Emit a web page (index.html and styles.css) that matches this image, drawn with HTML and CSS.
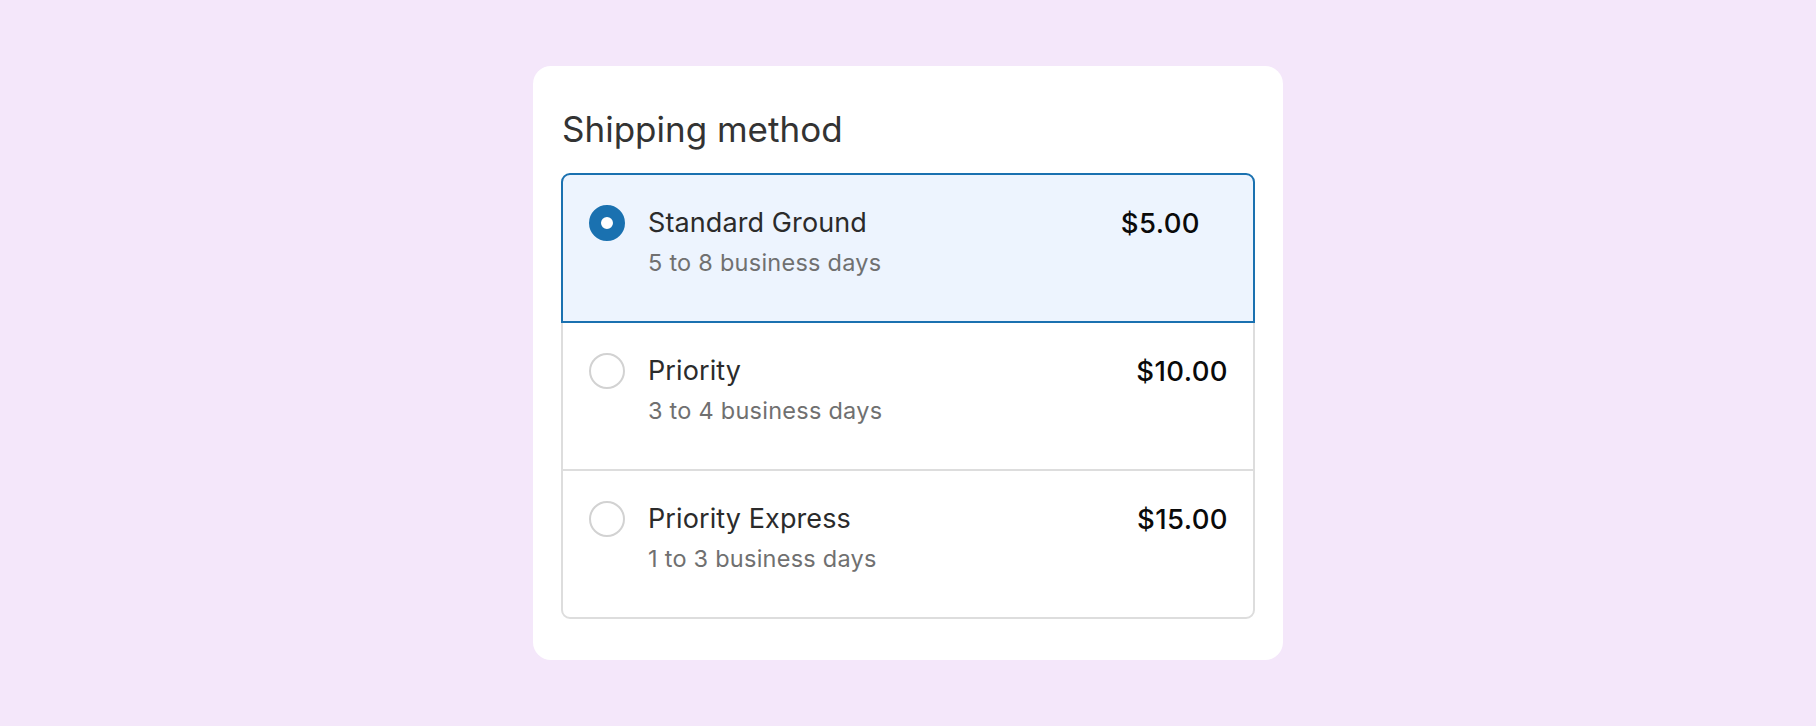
FILE: index.html
```html
<!DOCTYPE html>
<html lang="en">
<head>
<meta charset="utf-8">
<title>Shipping method</title>
<link rel="stylesheet" href="styles.css">
</head>
<body>
  <main class="card">
    <h1 class="card-title">Shipping method</h1>
    <div class="options">
      <label class="option option--selected">
        <span class="radio radio--checked"></span>
        <span class="option-text">
          <span class="option-name">Standard Ground</span>
          <span class="option-desc">5 to 8 business days</span>
        </span>
        <span class="option-price">$5.00</span>
      </label>
      <label class="option">
        <span class="radio"></span>
        <span class="option-text">
          <span class="option-name">Priority</span>
          <span class="option-desc">3 to 4 business days</span>
        </span>
        <span class="option-price">$10.00</span>
      </label>
      <label class="option">
        <span class="radio"></span>
        <span class="option-text">
          <span class="option-name">Priority Express</span>
          <span class="option-desc">1 to 3 business days</span>
        </span>
        <span class="option-price">$15.00</span>
      </label>
    </div>
  </main>
</body>
</html>
```
FILE: styles.css
```css
* { box-sizing: border-box; }

html, body { height: 100%; }

body {
  margin: 0;
  background: #f4e7fa;
  font-family: Inter, "Noto Sans", "Liberation Sans", sans-serif;
  display: flex;
  align-items: center;
  justify-content: center;
}

.card {
  width: 750px;
  background: #ffffff;
  border-radius: 18px;
  padding: 41px 28px 41px;
}

.card-title {
  margin: 0 0 22px 1px;
  font-size: 35px;
  line-height: 44px;
  font-weight: 400;
  color: #333333;
}

.options {
  display: flex;
  flex-direction: column;
}

.option {
  position: relative;
  display: flex;
  align-items: flex-start;
  gap: 23px;
  height: 150px;
  padding: 29px 25px 0 26px;
  border: 2px solid #dddddd;
  background: #ffffff;
  margin-top: -2px;
}

.option:first-child {
  margin-top: 0;
  border-radius: 9px 9px 0 0;
}

.option:last-child {
  border-radius: 0 0 9px 9px;
}

.option--selected {
  z-index: 1;
  border-color: #1a71b0;
  background: #edf4fe;
  padding-right: 53px;
}

.radio {
  flex: none;
  width: 36px;
  height: 36px;
  margin-top: 1px;
  border-radius: 50%;
  border: 2px solid #d2d2d2;
  background: #ffffff;
}

.radio--checked {
  border: 12px solid #1a71b0;
}

.option-text {
  flex: 1;
  display: flex;
  flex-direction: column;
  gap: 8px;
  padding-top: 2px;
}

.option-name {
  font-size: 27px;
  line-height: 34px;
  letter-spacing: 0.1px;
  color: #2b2b2b;
}

.option-desc {
  font-size: 23.5px;
  line-height: 30px;
  letter-spacing: 0.25px;
  color: #707070;
}

.option-price {
  padding-top: 2px;
  font-size: 27.5px;
  line-height: 34px;
  font-weight: 500;
  letter-spacing: 0.4px;
  color: #0a0a0a;
}
```
